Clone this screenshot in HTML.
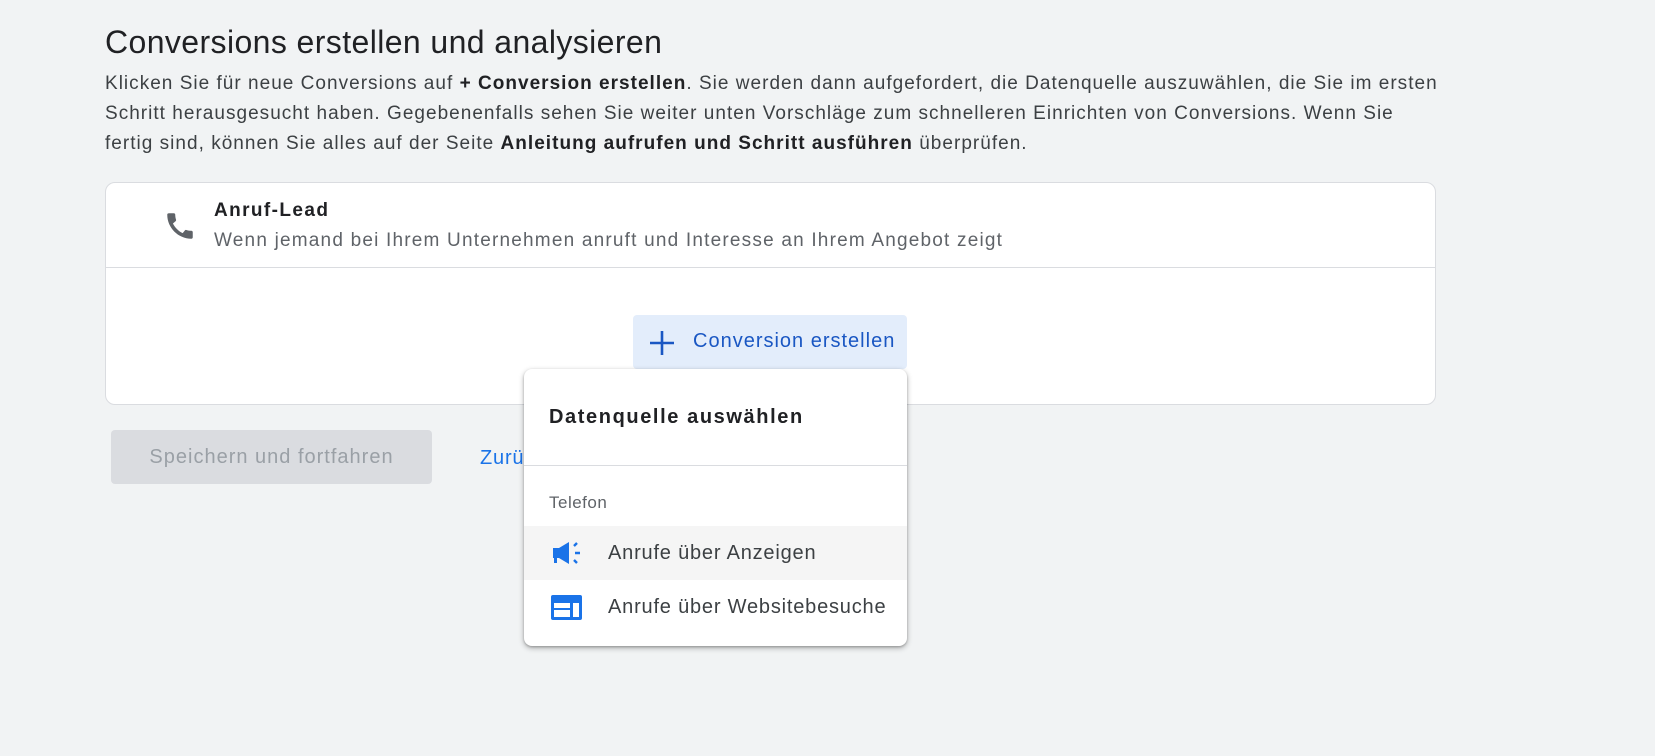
<!DOCTYPE html>
<html><head><meta charset="utf-8"><style>
*{margin:0;padding:0;box-sizing:border-box}
body{width:1655px;height:756px;background:#f1f3f4;font-family:"Liberation Sans",Arial,sans-serif;position:relative;overflow:hidden;color:#3c4043}
.abs{position:absolute;white-space:nowrap}
h1{position:absolute;left:105px;top:24px;font-size:32px;font-weight:400;color:#202124;letter-spacing:0.4px;white-space:nowrap}
.p{position:absolute;left:105px;top:69px;font-size:19px;line-height:30px;color:#3c4043;white-space:nowrap;letter-spacing:1.02px}
.p b{color:#202124}
.card{position:absolute;left:105px;top:182px;width:1331px;height:223px;background:#fff;border:1px solid #dadce0;border-radius:10px}
.div{position:absolute;left:0;right:0;top:84px;border-top:1px solid #dadce0}
.btn{position:absolute;left:633px;top:315px;width:274px;height:54px;background:#e3edfb;border-radius:4px;color:#1a57c3;font-size:20px;letter-spacing:1px}
.save{position:absolute;left:111px;top:430px;width:321px;height:54px;background:#dadce0;border-radius:4px;color:#9aa0a6;font-size:20px;letter-spacing:1px;text-align:center;line-height:54px}
.menu{position:absolute;left:524px;top:369px;width:383px;height:277px;background:#fff;border-radius:8px;box-shadow:0 2px 6px rgba(0,0,0,.3),0 1px 2px rgba(0,0,0,.2)}
.it{font-size:20px;color:#3c4043;letter-spacing:0.8px}
</style></head><body>
<h1>Conversions erstellen und analysieren</h1>
<div class="p">Klicken Sie für neue Conversions auf <b>+ Conversion erstellen</b>. Sie werden dann aufgefordert, die Datenquelle auszuwählen, die Sie im ersten<br>Schritt herausgesucht haben. Gegebenenfalls sehen Sie weiter unten Vorschläge zum schnelleren Einrichten von Conversions. Wenn Sie<br>fertig sind, können Sie alles auf der Seite <b>Anleitung aufrufen und Schritt ausführen</b> überprüfen.</div>
<div class="card">
<svg class="abs" style="left:57px;top:26px" width="34" height="34" viewBox="0 0 24 24"><path fill="#5f6368" d="M20.01 15.38c-1.23 0-2.420-.2-3.53-.56a.977.977 0 0 0-1.01.24l-1.57 1.97c-2.83-1.35-5.48-3.9-6.89-6.83l1.95-1.66c.27-.28.35-.67.24-1.02-.37-1.11-.56-2.3-.56-3.53 0-.54-.45-.99-.99-.99H4.19C3.65 3 3 3.24 3 3.99 3 13.28 10.73 21 20.01 21c.71 0 .99-.63.99-1.18v-3.45c0-.54-.45-.99-.99-.99z"/></svg>
<div class="abs" style="left:108px;top:17px;font-size:19px;font-weight:bold;color:#202124;letter-spacing:1.4px">Anruf-Lead</div>
<div class="abs" style="left:108px;top:47px;font-size:19px;color:#5f6368;letter-spacing:1.2px">Wenn jemand bei Ihrem Unternehmen anruft und Interesse an Ihrem Angebot zeigt</div>
<div class="div"></div>
</div>
<div class="btn">
<svg class="abs" style="left:16px;top:15px" width="26" height="26" viewBox="0 0 26 26"><path d="M13 1v24M1 13h24" stroke="#1a57c3" stroke-width="2.6"/></svg>
<div class="abs" style="left:60px;top:15px">Conversion erstellen</div>
</div>
<div class="save">Speichern und fortfahren</div>
<div class="abs" style="left:480px;top:447px;font-size:20px;color:#1a73e8;letter-spacing:0.8px">Zurück</div>
<div class="menu">
<div class="abs" style="left:25px;top:37px;font-size:20px;font-weight:bold;color:#202124;letter-spacing:1.6px">Datenquelle auswählen</div>
<div class="abs" style="left:0;right:0;top:96px;border-top:1px solid #dadce0"></div>
<div class="abs" style="left:25px;top:124px;font-size:17px;color:#5f6368;letter-spacing:0.5px">Telefon</div>
<div class="abs" style="left:0;right:0;top:157px;height:54px;background:#f5f5f5"></div>
<svg class="abs" style="left:27px;top:171px" width="32" height="26" viewBox="0 0 32 26"><path fill="#1a73e8" d="M2 8h6l10-6v22L8 18H6v5H3v-5H2z"/><path d="M23 6l3-3M24 13h5M23 20l3 3" stroke="#1a73e8" stroke-width="2.4"/></svg>
<div class="abs it" style="left:84px;top:173px">Anrufe über Anzeigen</div>
<svg class="abs" style="left:27px;top:226px" width="31" height="25" viewBox="0 0 31 25"><rect x="0" y="0" width="31" height="25" rx="2" fill="#1a73e8"/><rect x="3" y="8" width="16" height="5" fill="#fff"/><rect x="3" y="15" width="16" height="7" fill="#fff"/><rect x="22" y="8" width="6" height="14" fill="#fff"/></svg>
<div class="abs it" style="left:84px;top:227px">Anrufe über Websitebesuche</div>
</div>
</body></html>
